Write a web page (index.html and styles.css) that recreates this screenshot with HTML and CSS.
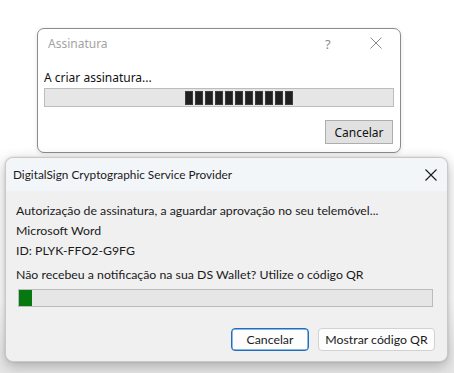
FILE: index.html
```html
<!DOCTYPE html>
<html lang="pt">
<head>
<meta charset="utf-8">
<link rel="stylesheet" href="styles.css">
</head>
<body>
<div class="page">
  <div class="dlg1">
    <div class="dlg1-title">
      <span class="dlg1-name">Assinatura</span>
      <span class="dlg1-help">?</span>
      <svg class="dlg1-close" width="12" height="12" viewBox="0 0 12 12"><path d="M0.5 0.5 L11.5 11.5 M11.5 0.5 L0.5 11.5" stroke="#8a8a8a" stroke-width="1" fill="none"/></svg>
    </div>
    <div class="dlg1-body">
      <div class="dlg1-label">A criar assinatura...</div>
      <div class="marquee">
        <div class="blocks">
          <span></span><span></span><span></span><span></span><span></span><span></span><span></span><span></span><span></span><span></span><span></span>
        </div>
      </div>
      <div class="dlg1-actions">
        <button class="btn-classic">Cancelar</button>
      </div>
    </div>
  </div>

  <div class="dlg2">
    <div class="dlg2-title">
      <span>DigitalSign Cryptographic Service Provider</span>
      <svg class="dlg2-close" width="12" height="12" viewBox="0 0 12 12"><path d="M0.5 0.5 L11.5 11.5 M11.5 0.5 L0.5 11.5" stroke="#1a1a1a" stroke-width="1.1" fill="none"/></svg>
    </div>
    <div class="dlg2-body">
      <div class="line">Autorização de assinatura, a aguardar aprovação no seu telemóvel...</div>
      <div class="line">Microsoft Word</div>
      <div class="line">ID: PLYK-FFO2-G9FG</div>
      <div class="line line-q">Não recebeu a notificação na sua DS Wallet? Utilize o código QR</div>
      <div class="progress"><div class="progress-fill" style="width:13px"></div></div>
      <div class="dlg2-actions">
        <button class="btn btn-default">Cancelar</button>
        <button class="btn btn-qr">Mostrar código QR</button>
      </div>
    </div>
  </div>
</div>
</body>
</html>
```
FILE: styles.css
```css
* { box-sizing: border-box; }
html, body { margin: 0; padding: 0; }
body {
  width: 454px;
  height: 373px;
  overflow: hidden;
  background: linear-gradient(#ffffff 0, #ffffff 300px, #e6e6e6 373px);
  font-family: "Noto Sans", "Open Sans", sans-serif;
  font-size: 12px;
  color: #1a1a1a;
}
.page {
  display: flex;
  flex-direction: column;
  align-items: flex-start;
}
.dlg1 {
  margin: 28px 0 0 37px;
  width: 364px;
  height: 125px;
  background: #fff;
  border: 1px solid #8c8c8c;
  border-radius: 7px;
  box-shadow: 0 1px 4px rgba(0,0,0,0.12);
  display: flex;
  flex-direction: column;
}
.dlg1-title {
  height: 29px;
  display: flex;
  align-items: center;
  padding-left: 10px;
  position: relative;
}
.dlg1-name { color: #a3a3a3; font-size: 12px; }
.dlg1-help {
  position: absolute;
  left: 287px;
  top: 6px;
  color: #8c8c8c;
  font-size: 13px;
}
.dlg1-close { position: absolute; left: 332px; top: 8px; }
.dlg1-body {
  padding: 10px 6px 0 6px;
  display: flex;
  flex-direction: column;
}
.dlg1-label { line-height: 20px; height: 20px; color: #111; }
.marquee {
  width: 350px;
  height: 19px;
  background: #e6e6e6;
  border: 1px solid #bcbcbc;
  padding: 2px 0 1px 140px;
}
.blocks { display: flex; gap: 2px; height: 100%; }
.blocks span {
  width: 8px;
  height: 100%;
  background: #202020;
  border: 1px solid #3c3c3c;
}
.dlg1-actions {
  display: flex;
  justify-content: flex-end;
  margin-top: 13px;
}
.btn-classic {
  width: 68px;
  height: 24px;
  margin-right: 1px;
  background: #e1e1e1;
  border: 1px solid #adadad;
  font-family: inherit;
  font-size: 12px;
  color: #111;
  padding: 0;
}
.dlg2 {
  margin: 4px 0 0 5px;
  width: 443px;
  height: 205px;
  background: #f0f0f0;
  border: 1px solid #c9c9c9;
  border-radius: 8px;
  box-shadow: 0 4px 14px rgba(0,0,0,0.28), 0 0 2px rgba(0,0,0,0.15);
  overflow: hidden;
  display: flex;
  flex-direction: column;
  font-family: Lato, "Noto Sans", sans-serif;
}
.dlg2-title {
  height: 33px;
  background: #f3f6f9;
  display: flex;
  align-items: center;
  justify-content: space-between;
  padding: 0 10px 0 7px;
  font-size: 11.8px;
  color: #1a1a1a;
}
.dlg2-body {
  padding: 10px 12px 0 10px;
  display: flex;
  flex-direction: column;
  font-size: 12.3px;
}
.line { line-height: 20px; height: 20px; white-space: nowrap; }
.line-q { margin-top: 4px; }
.progress {
  margin: 4px 0 0 2px;
  width: 415px;
  height: 18px;
  background: #e6e6e6;
  border: 1px solid #bcbcbc;
}
.progress-fill { height: 100%; background: #06780f; }
.dlg2-actions {
  display: flex;
  justify-content: flex-end;
  gap: 9px;
  margin-top: 21px;
}
.btn {
  height: 23px;
  border-radius: 4px;
  background: #fdfdfd;
  border: 1px solid #d2d2d2;
  font-family: inherit;
  font-size: 12.3px;
  color: #1a1a1a;
  padding: 0;
}
.btn-default {
  width: 78px;
  border: 1px solid #1f6fc0;
  box-shadow: inset 0 0 0 0.5px #1f6fc0;
}
.btn-qr { width: 117px; }
```
